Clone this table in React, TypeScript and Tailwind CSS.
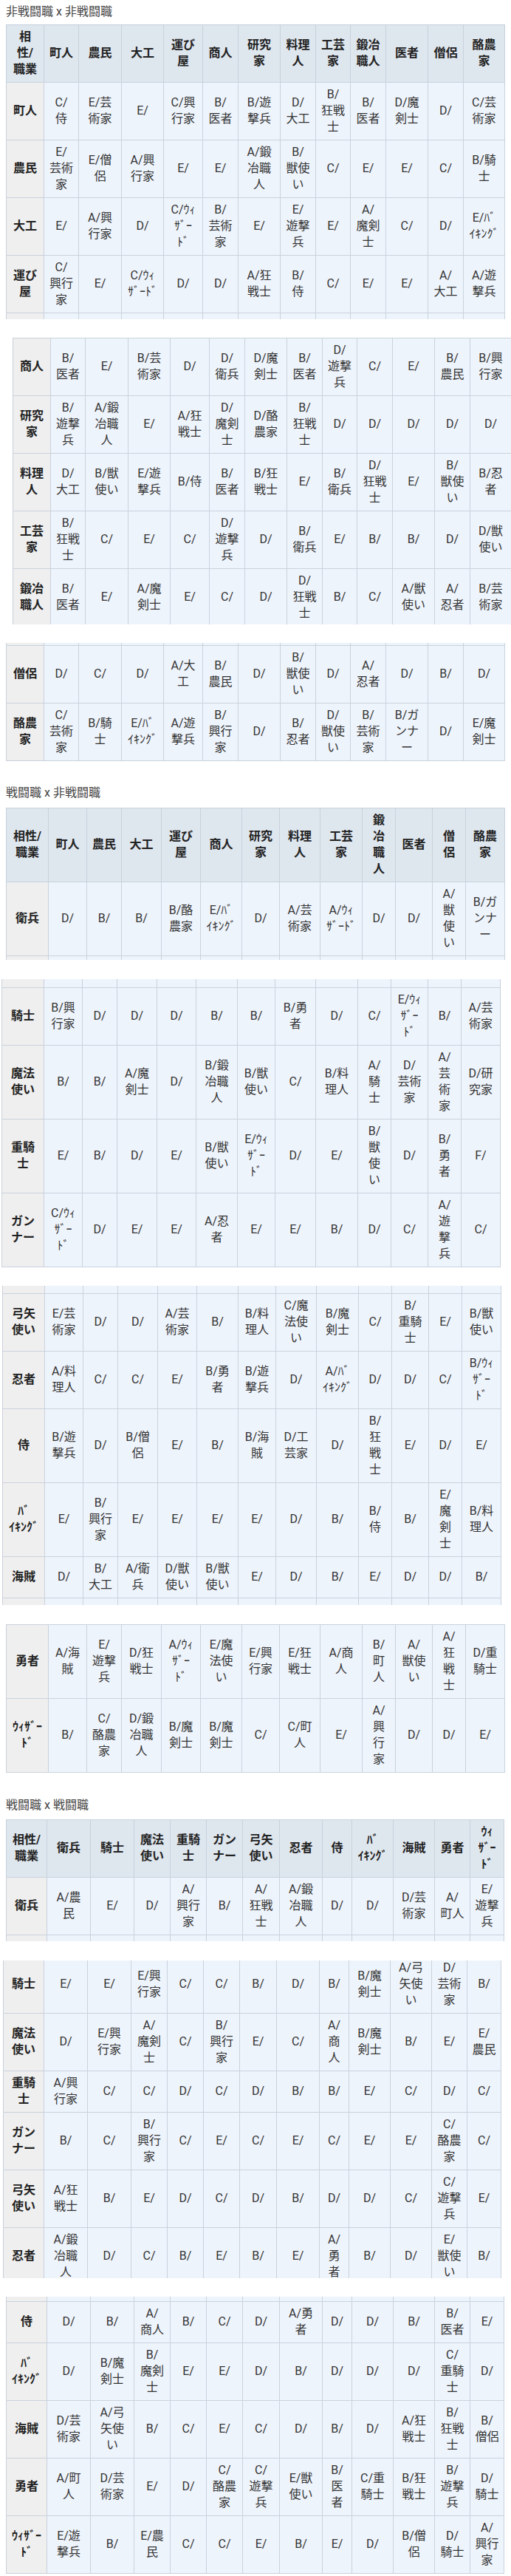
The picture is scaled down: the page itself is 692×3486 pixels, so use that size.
import React from "react";

type Kind = "head" | "label" | "data";

type Chunk = {
  wrap: string;
  inner: string;
  cols: string;
  header?: string[];
  topSliver?: boolean;
  bottomSliver?: boolean;
  rows: string[][];
};

const C1 = "grid-cols-[50px_46px_57px_56px_52px_47px_56px_47px_46px_47px_56px_47px_55px]";
const C2 = "grid-cols-[56px_51px_46px_53px_52px_55px_50px_54px_56px_44px_49px_44px_52px]";
const C3 = "grid-cols-[54px_58px_58px_48px_48px_48px_49px_57px_39px_55px_55px_47px_45px]";

const H1 = ["相|性/|職業", "町人", "農民", "大工", "運び|屋", "商人", "研究|家", "料理|人", "工芸|家", "鍛冶|職人", "医者", "僧侶", "酪農|家"];
const H2 = ["相性/|職業", "町人", "農民", "大工", "運び|屋", "商人", "研究|家", "料理|人", "工芸|家", "鍛|冶|職|人", "医者", "僧|侶", "酪農|家"];
const H3 = ["相性/|職業", "衛兵", "騎士", "魔法|使い", "重騎|士", "ガン|ナー", "弓矢|使い", "忍者", "侍", "ﾊﾞ|ｲｷﾝｸﾞ", "海賊", "勇者", "ｳｨ|ｻﾞｰ|ﾄﾞ"];

const section1: Chunk[] = [
  {
    wrap: "mt-[6px] ml-[8px] h-[399px]",
    inner: "",
    cols: C1,
    header: H1,
    bottomSliver: true,
    rows: [
      ["町人", "C/|侍", "E/芸|術家", "E/", "C/興|行家", "B/|医者", "B/遊|撃兵", "D/|大工", "B/|狂戦|士", "B/|医者", "D/魔|剣士", "D/", "C/芸|術家"],
      ["農民", "E/|芸術|家", "E/僧|侶", "A/興|行家", "E/", "E/", "A/鍛|冶職|人", "B/|獣使|い", "C/", "E/", "E/", "C/", "B/騎|士"],
      ["大工", "E/", "A/興|行家", "D/", "C/ｳｨ|ｻﾞｰ|ﾄﾞ", "B/|芸術|家", "E/", "E/|遊撃|兵", "E/", "A/|魔剣|士", "C/", "D/", "E/ﾊﾞ|ｲｷﾝｸﾞ"],
      ["運び|屋", "C/|興行|家", "E/", "C/ｳｨ|ｻﾞｰﾄﾞ", "D/", "D/", "A/狂|戦士", "B/|侍", "C/", "E/", "E/", "A/|大工", "A/遊|撃兵"],
    ],
  },
  {
    wrap: "mt-[25px] ml-[17px] h-[388px]",
    inner: "",
    cols: C1,
    rows: [
      ["商人", "B/|医者", "E/", "B/芸|術家", "D/", "D/|衛兵", "D/魔|剣士", "B/|医者", "D/|遊撃|兵", "C/", "E/", "B/|農民", "B/興|行家"],
      ["研究|家", "B/|遊撃|兵", "A/鍛|冶職|人", "E/", "A/狂|戦士", "D/|魔剣|士", "D/酪|農家", "B/|狂戦|士", "D/", "D/", "D/", "D/", "D/"],
      ["料理|人", "D/|大工", "B/獣|使い", "E/遊|撃兵", "B/侍", "B/|医者", "B/狂|戦士", "E/", "B/|衛兵", "D/|狂戦|士", "E/", "B/|獣使|い", "B/忍|者"],
      ["工芸|家", "B/|狂戦|士", "C/", "E/", "C/", "D/|遊撃|兵", "D/", "B/|衛兵", "E/", "B/", "B/", "D/", "D/獣|使い"],
      ["鍛冶|職人", "B/|医者", "E/", "A/魔|剣士", "E/", "C/", "D/", "D/|狂戦|士", "B/", "C/", "A/獣|使い", "A/|忍者", "B/芸|術家"],
    ],
  },
  {
    wrap: "mt-[25px] ml-[8px]",
    inner: "-mt-[38px]",
    cols: C1,
    topSliver: true,
    rows: [
      ["僧侶", "D/", "C/", "D/", "A/大|工", "B/|農民", "D/", "B/|獣使|い", "D/", "A/|忍者", "D/", "B/", "D/"],
      ["酪農|家", "C/|芸術|家", "B/騎|士", "E/ﾊﾞ|ｲｷﾝｸﾞ", "A/遊|撃兵", "B/|興行|家", "D/", "B/|忍者", "D/|獣使|い", "B/|芸術|家", "B/ガ|ンナ|ー", "D/", "E/魔|剣士"],
    ],
  },
];

const section2: Chunk[] = [
  {
    wrap: "mt-[9px] ml-[8px] h-[206px]",
    inner: "",
    cols: C2,
    header: H2,
    bottomSliver: true,
    rows: [
      ["衛兵", "D/", "B/", "B/", "B/酪|農家", "E/ﾊﾞ|ｲｷﾝｸﾞ", "D/", "A/芸|術家", "A/ｳｨ|ｻﾞｰﾄﾞ", "D/", "D/", "A/|獣|使|い", "B/ガ|ンナ|ー"],
    ],
  },
  {
    wrap: "mt-[26px] ml-[2px]",
    inner: "-mt-[30px]",
    cols: C2,
    topSliver: true,
    rows: [
      ["騎士", "B/興|行家", "D/", "D/", "D/", "B/", "B/", "B/勇|者", "D/", "C/", "E/ｳｨ|ｻﾞｰ|ﾄﾞ", "B/", "A/芸|術家"],
      ["魔法|使い", "B/", "B/", "A/魔|剣士", "D/", "B/鍛|冶職|人", "B/獣|使い", "C/", "B/料|理人", "A/|騎|士", "D/|芸術|家", "A/|芸|術|家", "D/研|究家"],
      ["重騎|士", "E/", "B/", "D/", "E/", "B/獣|使い", "E/ｳｨ|ｻﾞｰ|ﾄﾞ", "D/", "E/", "B/|獣|使|い", "D/", "B/|勇|者", "F/"],
      ["ガン|ナー", "C/ｳｨ|ｻﾞｰ|ﾄﾞ", "D/", "E/", "E/", "A/忍|者", "E/", "E/", "B/", "D/", "C/", "A/|遊|撃|兵", "C/"],
    ],
  },
  {
    wrap: "mt-[25px] ml-[3px] h-[432px]",
    inner: "-mt-[31px]",
    cols: C2,
    topSliver: true,
    bottomSliver: true,
    rows: [
      ["弓矢|使い", "E/芸|術家", "D/", "D/", "A/芸|術家", "B/", "B/料|理人", "C/魔|法使|い", "B/魔|剣士", "C/", "B/|重騎|士", "E/", "B/獣|使い"],
      ["忍者", "A/料|理人", "C/", "C/", "E/", "B/勇|者", "B/遊|撃兵", "D/", "A/ﾊﾞ|ｲｷﾝｸﾞ", "D/", "D/", "C/", "B/ｳｨ|ｻﾞｰ|ﾄﾞ"],
      ["侍", "B/遊|撃兵", "D/", "B/僧|侶", "E/", "B/", "B/海|賊", "D/工|芸家", "D/", "B/|狂|戦|士", "E/", "D/", "E/"],
      ["ﾊﾞ|ｲｷﾝｸﾞ", "E/", "B/|興行|家", "E/", "E/", "E/", "E/", "D/", "B/", "B/|侍", "B/", "E/|魔|剣|士", "B/料|理人"],
      ["海賊", "D/", "B/|大工", "A/衛|兵", "D/獣|使い", "B/獣|使い", "E/", "D/", "B/", "E/", "D/", "D/", "B/"],
    ],
  },
  {
    wrap: "mt-[26px] ml-[8px]",
    inner: "",
    cols: C2,
    rows: [
      ["勇者", "A/海|賊", "E/|遊撃|兵", "D/狂|戦士", "A/ｳｨ|ｻﾞｰ|ﾄﾞ", "E/魔|法使|い", "E/興|行家", "E/狂|戦士", "A/商|人", "B/|町|人", "A/|獣使|い", "A/|狂|戦|士", "D/重|騎士"],
      ["ｳｨｻﾞｰ|ﾄﾞ", "B/", "C/|酪農|家", "D/鍛|冶職|人", "B/魔|剣士", "B/魔|剣士", "C/", "C/町|人", "E/", "A/|興|行|家", "D/", "D/", "E/"],
    ],
  },
];

const section3: Chunk[] = [
  {
    wrap: "mt-[8px] ml-[8px] h-[165px]",
    inner: "",
    cols: C3,
    header: H3,
    bottomSliver: true,
    rows: [
      ["衛兵", "A/農|民", "E/", "D/", "A/|興行|家", "B/", "A/|狂戦|士", "A/鍛|冶職|人", "D/", "D/", "D/芸|術家", "A/|町人", "E/|遊撃|兵"],
    ],
  },
  {
    wrap: "mt-[26px] ml-[4px] h-[430px]",
    inner: "-mt-[7px]",
    cols: C3,
    rows: [
      ["騎士", "E/", "E/", "E/興|行家", "C/", "C/", "B/", "D/", "B/", "B/魔|剣士", "A/弓|矢使|い", "D/|芸術|家", "B/"],
      ["魔法|使い", "D/", "E/興|行家", "A/|魔剣|士", "C/", "B/|興行|家", "E/", "C/", "A/|商|人", "B/魔|剣士", "B/", "E/", "E/|農民"],
      ["重騎|士", "A/興|行家", "C/", "C/", "D/", "C/", "D/", "B/", "B/", "E/", "C/", "D/", "C/"],
      ["ガン|ナー", "B/", "C/", "B/|興行|家", "C/", "E/", "C/", "E/", "C/", "E/", "E/", "C/|酪農|家", "C/"],
      ["弓矢|使い", "A/狂|戦士", "B/", "E/", "D/", "C/", "D/", "B/", "D/", "D/", "C/", "C/|遊撃|兵", "E/"],
      ["忍者", "A/鍛|冶職|人", "D/", "C/", "B/", "E/", "B/", "E/", "A/|勇|者", "B/", "D/", "E/|獣使|い", "B/"],
    ],
  },
  {
    wrap: "mt-[25px] ml-[8px]",
    inner: "-mt-[35px]",
    cols: C3,
    topSliver: true,
    rows: [
      ["侍", "D/", "B/", "A/|商人", "B/", "C/", "D/", "A/勇|者", "D/", "D/", "B/", "B/|医者", "E/"],
      ["ﾊﾞ|ｲｷﾝｸﾞ", "D/", "B/魔|剣士", "B/|魔剣|士", "E/", "E/", "D/", "B/", "D/", "D/", "D/", "C/|重騎|士", "D/"],
      ["海賊", "D/芸|術家", "A/弓|矢使|い", "B/", "C/", "E/", "C/", "D/", "B/", "D/", "A/狂|戦士", "B/|狂戦|士", "B/|僧侶"],
      ["勇者", "A/町|人", "D/芸|術家", "E/", "D/", "C/|酪農|家", "C/|遊撃|兵", "E/獣|使い", "B/|医|者", "C/重|騎士", "B/狂|戦士", "B/|遊撃|兵", "D/|騎士"],
      ["ｳｨｻﾞｰ|ﾄﾞ", "E/遊|撃兵", "B/", "E/農|民", "C/", "C/", "E/", "B/", "E/", "D/", "B/僧|侶", "D/|騎士", "A/|興行|家"],
    ],
  },
];

function Cell({ text, kind }: { text: string; kind: Kind }) {
  const tone =
    kind === "head"
      ? "bg-[#dee6ee] font-bold text-[#222222]"
      : kind === "label"
      ? "bg-[#efefef] font-bold text-[#222222]"
      : "bg-[#eef4fc] text-[#333333]";
  return (
    <div className={`flex flex-col items-center justify-center pt-[5px] pb-[6px] text-center text-[16px] leading-[22px] ${tone}`}>
      {text.split("|").map((line, i) => (
        <span key={i} className="block whitespace-nowrap">
          {line}
        </span>
      ))}
    </div>
  );
}

function Sliver() {
  return (
    <>
      {Array.from({ length: 13 }).map((_, i) => (
        <div key={i} className={`h-[40px] ${i === 0 ? "bg-[#efefef]" : "bg-[#eef4fc]"}`} />
      ))}
    </>
  );
}

function Block({ chunk }: { chunk: Chunk }) {
  return (
    <div className={`overflow-hidden w-max ${chunk.wrap}`}>
      <div className={`grid w-max gap-px bg-[#c9d2dc] p-px ${chunk.cols} ${chunk.inner}`}>
        {chunk.topSliver && <Sliver />}
        {chunk.header && chunk.header.map((h, i) => <Cell key={`h${i}`} text={h} kind="head" />)}
        {chunk.rows.map((row, r) =>
          row.map((c, i) => <Cell key={`${r}-${i}`} text={c} kind={i === 0 ? "label" : "data"} />)
        )}
        {chunk.bottomSliver && <Sliver />}
      </div>
    </div>
  );
}

function Title({ text, className }: { text: string; className: string }) {
  return <div className={`ml-[8px] text-[16px] leading-[22px] text-[#444444] ${className}`}>{text}</div>;
}

export default function App() {
  return (
    <div className="w-[692px] min-h-[3486px] overflow-hidden bg-white pt-[5px] font-['Roboto','Noto_Sans_CJK_JP',sans-serif]">
      <Title text="非戦闘職 x 非戦闘職" className="" />
      {section1.map((c, i) => (
        <Block key={`a${i}`} chunk={c} />
      ))}
      <Title text="戦闘職 x 非戦闘職" className="mt-[32px]" />
      {section2.map((c, i) => (
        <Block key={`b${i}`} chunk={c} />
      ))}
      <Title text="戦闘職 x 戦闘職" className="mt-[33px]" />
      {section3.map((c, i) => (
        <Block key={`c${i}`} chunk={c} />
      ))}
    </div>
  );
}
